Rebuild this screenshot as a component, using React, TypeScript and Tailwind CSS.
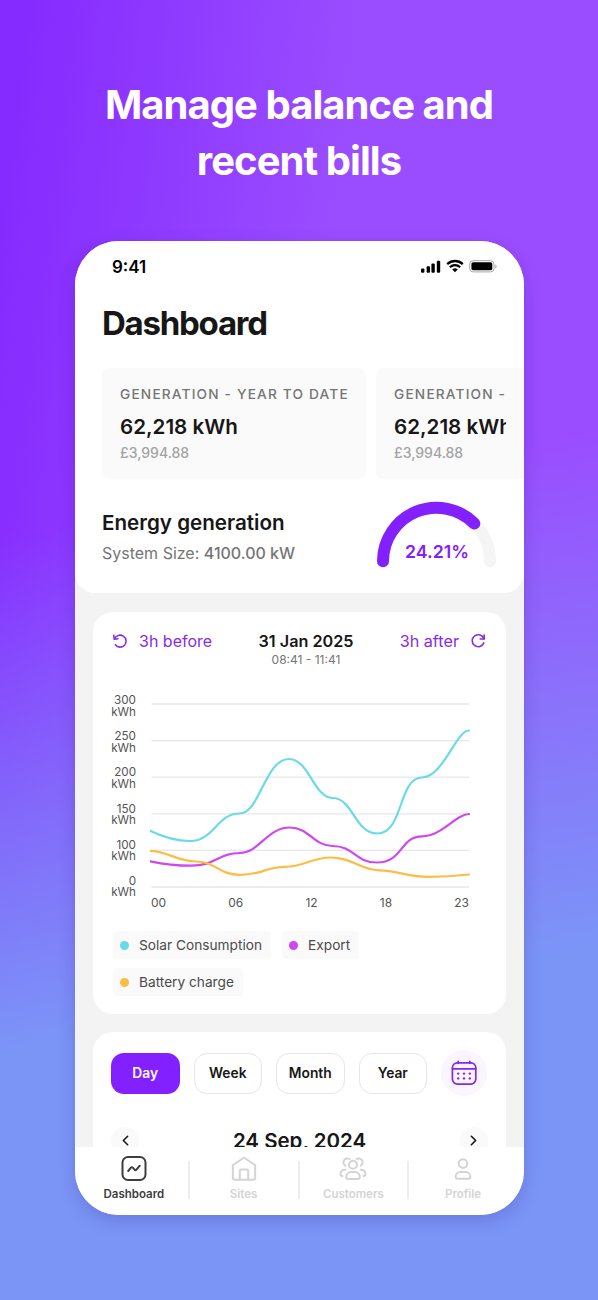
import { ChevronLeft, ChevronRight } from 'lucide-react'
import type { ReactNode } from 'react'

const stats = [
  { id: 'ytd', label: 'GENERATION - YEAR TO DATE', value: '62,218 kWh', amount: '£3,994.88' },
  { id: 'month', label: 'GENERATION - MONTH', value: '62,218 kWh', amount: '£3,994.88' },
]

const yLabels = ['300', '250', '200', '150', '100', '0']
const xLabels = ['00', '06', '12', '18', '23']

// paths share the chart's 320x190 box
const series = [
  {
    name: 'Solar Consumption',
    color: '#69dbe8',
    d: 'M0.5 130.5C12 136 25 140.5 40 140.5C64 140.5 67 113 89.5 113C110 113 115 58.5 139 58.5C159 58.5 164 97.5 182.5 97.5C203 97.5 205 133 227 133C254 133 248 77 272 77C293 77 306 30 319 30',
  },
  {
    name: 'Export',
    color: '#cf47ee',
    d: 'M0.5 160.8C13 163.5 26 165.2 41 165.2C66 165.2 68 152.5 90 152.5C109 152.5 117 127 140 127C159 127 164 145.5 182.5 145.5C204 145.5 205 162 227 162C253 162 250 135.8 272 135.8C292 135.8 306 113.5 319 113.5',
  },
  {
    name: 'Battery charge',
    color: '#fbbd48',
    d: 'M0.5 150.3C16 150.3 28 161 46 161C66 161 68 174.3 90 174.3C113 174.3 115 166.3 135 166.3C154 166.3 161 157 181 157C202 157 210 169.5 229 169.8C249 170 255 176.4 279 176.4C293 176.4 306 175.5 319 174',
  },
]

const periods = ['Day', 'Week', 'Month', 'Year']

function StatusIcons() {
  return (
    <svg width="78" height="16" viewBox="0 0 78 16" fill="none">
      <rect x="1" y="9.6" width="3.4" height="4.2" rx="1" fill="#000" />
      <rect x="6.6" y="7.2" width="3.4" height="6.6" rx="1" fill="#000" />
      <rect x="11.4" y="4.6" width="3.4" height="9.2" rx="1" fill="#000" />
      <rect x="16.8" y="1.7" width="3.4" height="12.1" rx="1" fill="#000" />
      <path d="M27.2 5.1a11.3 11.3 0 0 1 15.6 0" stroke="#000" strokeWidth="2.3" />
      <path d="M29.9 8.2a7.3 7.3 0 0 1 10.2 0" stroke="#000" strokeWidth="2.2" />
      <path d="M32.2 10.6a4.1 4.1 0 0 1 5.6 0L35 13.3z" fill="#000" />
      <rect x="49.7" y="1.7" width="24.3" height="11.2" rx="3.4" stroke="#a6a6a6" />
      <rect x="51.4" y="3.3" width="20.9" height="8" rx="1.7" fill="#000" />
      <path d="M75.3 5.4v4a2.2 2.2 0 0 0 0-4z" fill="#a6a6a6" />
    </svg>
  )
}

function RewindIcon() {
  return (
    <svg width="16" height="16" viewBox="0 0 16 16" fill="none" stroke="#8a2be2" strokeWidth="1.6" strokeLinecap="round" strokeLinejoin="round">
      <path d="M1.8 2.4l.5 3.8 3.7-.5" />
      <path d="M2.5 5.9A6 6 0 1 1 3.3 11.8" />
    </svg>
  )
}

function ForwardIcon() {
  return (
    <svg width="16" height="16" viewBox="0 0 16 16" fill="none" stroke="#8a2be2" strokeWidth="1.6" strokeLinecap="round" strokeLinejoin="round">
      <path d="M14.2 2v4h-4" />
      <path d="M13.9 5.8A6 6 0 1 0 13.8 9.9" />
    </svg>
  )
}

function CalendarIcon() {
  return (
    <svg width="28" height="28" viewBox="0 0 28 28" fill="none" stroke="#8426f0" strokeWidth="1.7" strokeLinecap="round">
      <rect x="2.4" y="3.8" width="23.4" height="21.3" rx="5" />
      <path d="M2.4 9.8h23.4M8.2 2.300v2M19.800 2.300v2" />
      {[8.2, 14, 19.8].map(x => (
        <g key={x} fill="#8426f0" stroke="none">
          <circle cx={x} cy="14.6" r="1.2" />
          <circle cx={x} cy="19.4" r="1.2" />
        </g>
      ))}
    </svg>
  )
}

function Gauge() {
  return (
    <svg width="120" height="68" viewBox="0 0 120 68" fill="none" strokeWidth="12" strokeLinecap="round">
      <path d="M6 60.2a53.5 53.5 0 0 1 107 0" stroke="#f5f5f5" />
      <path d="M6 60.2a53.5 53.5 0 0 1 91.3-37.8" stroke="#8320ff" />
    </svg>
  )
}

function Tab({ label, active, children }: { label: string; active?: boolean; children: ReactNode }) {
  return (
    <div className={active ? 'flex-1 flex flex-col items-center text-[#3d3d3d]' : 'flex-1 flex flex-col items-center text-[#d4d4d4]'}>
      <svg width="28" height="28" viewBox="0 0 28 28" fill="none" stroke="currentColor" strokeWidth="2" strokeLinecap="round" strokeLinejoin="round">
        {children}
      </svg>
      <span className="mt-[3px] text-[11.5px] leading-4 font-semibold">{label}</span>
    </div>
  )
}

function Divider() {
  return <div className="-mx-px mt-[6px] h-[38px] w-0.5 bg-[#ededed]" />
}

export default function App() {
  return (
    <div className="h-[1300px] w-[598px] overflow-hidden bg-[linear-gradient(170deg,#7b95f700_38%,#7b95f7_75%),linear-gradient(97deg,#862bff_4%,#9a4dff_48%)] font-['Inter',sans-serif]">
      <h1 className="pt-[77px] text-center text-[40px] leading-[56px] font-bold tracking-[-0.95px] text-white">
        Manage balance and
        <br />
        recent bills
      </h1>

      <div className="mt-[52px] ml-[75px] flex h-[974px] w-[449px] flex-col overflow-hidden rounded-[44px] bg-[#f3f3f3] shadow-[0_6px_18px_rgba(40,20,120,0.2)]">
        <header className="h-[352px] shrink-0 rounded-b-[20px] bg-white">
          <div className="flex h-[52px] items-center justify-between pr-[26px] pl-[37px]">
            <span className="text-[17px] leading-5 font-semibold text-black">9:41</span>
            <StatusIcons />
          </div>
          <h2 className="mt-[10px] pl-[27px] text-[33px] leading-10 font-bold tracking-[-1.25px] text-[#171717]">Dashboard</h2>

          <div className="mt-[25px] flex gap-[10px] overflow-hidden pl-[27px]">
            {stats.map((s, i) => (
              <div key={s.id} className="h-[111px] w-[264px] shrink-0 rounded-lg bg-[#fafafa] px-[18px] pt-4">
                <div className={i === 0 ? 'whitespace-nowrap' : 'w-[112px] overflow-hidden whitespace-nowrap'}>
                  <p className="text-[13.7px] leading-5 font-medium tracking-[1.18px] text-[#757575]">{s.label}</p>
                  <p className="mt-[9px] text-[20.6px] leading-7 font-semibold text-[#171717]">{s.value}</p>
                  <p className="mt-[3px] text-[14px] leading-[18px] font-medium text-[#a3a3a3]">{s.amount}</p>
                </div>
              </div>
            ))}
          </div>

          <div className="flex justify-between pt-[22px] pr-[27px] pl-[27px]">
            <div className="pt-2">
              <h3 className="text-[20.6px] leading-7 font-semibold text-[#171717]">Energy generation</h3>
              <p className="mt-1 text-[16px] leading-6 text-[#757575]">
                System Size: <span className="font-medium">4100.00 kW</span>
              </p>
            </div>
            <div className="relative h-[68px] w-[120px]">
              <Gauge />
              <span className="absolute inset-x-0 top-[39px] text-center text-[17.7px] leading-6 font-semibold text-[#8320ff]">24.21%</span>
            </div>
          </div>
        </header>

        <section className="mx-[18px] mt-[19px] h-[402px] shrink-0 rounded-[20px] bg-white">
          <div className="flex justify-between pt-[18px] pr-5 pl-[19px]">
            <div className="flex h-[22px] w-[104px] items-center gap-[11px] text-[16px] whitespace-nowrap text-[#8a2be2]">
              <RewindIcon />
              3h before
            </div>
            <div className="flex flex-col items-center">
              <span className="text-[16.2px] leading-[22px] font-semibold text-[#171717]">31 Jan 2025</span>
              <span className="text-[12px] leading-4 text-[#757575]">08:41 - 11:41</span>
            </div>
            <div className="flex h-[22px] w-[90px] items-center justify-end gap-[11px] text-[16.2px] whitespace-nowrap text-[#8a2be2]">
              3h after
              <ForwardIcon />
            </div>
          </div>

          <div className="mt-[27px] flex pl-[18px]">
            <div className="w-[25px] text-right text-[11.7px] leading-[11.5px] text-[#545454]">
              {yLabels.map(y => (
                <div key={y} className="h-[36.2px]">
                  {y}
                  <br />
                  kWh
                </div>
              ))}
            </div>
            <div className="ml-[14px] w-[320px] pt-[5px]">
              <svg width="320" height="190" viewBox="0 -0.5 320 190" fill="none">
                {yLabels.map((y, i) => (
                  <path key={y} d={`M1.5 ${3.5 + i * 36.6}H319`} stroke="#e7e7e9" strokeWidth="1.3" />
                ))}
                {series.map(s => (
                  <path key={s.name} d={s.d} stroke={s.color} strokeWidth="2.2" strokeLinecap="round" />
                ))}
              </svg>
              <div className="mt-[5px] flex justify-between pr-px pl-px text-[12px] leading-4 text-[#545454]">
                {xLabels.map(x => <span key={x}>{x}</span>)}
              </div>
            </div>
          </div>

          <div className="mt-[19px] flex flex-wrap gap-x-[11px] gap-y-[9px] pr-16 pl-5">
            {series.map(s => (
              <div key={s.name} className="flex h-7 items-center gap-[10px] rounded bg-[#fafafa] pr-[9px] pl-[7px] text-[13.7px] text-[#4a4a4a]">
                <span className="size-[9px] rounded-full" style={{ background: s.color }} />
                {s.name}
              </div>
            ))}
          </div>
        </section>

        <section className="mx-[18px] mt-[18px] min-h-0 flex-1 overflow-hidden rounded-t-[20px] bg-white">
          <div className="flex items-center gap-[14px] pt-[18px] pl-[18px]">
            {periods.map(p => (
              <button
                key={p}
                className={
                  p === 'Day'
                    ? 'h-[41px] w-[68.5px] rounded-[13px] bg-[#8320ff] text-[13.8px] font-semibold text-white'
                    : 'h-[41px] w-[68.5px] rounded-[13px] border border-[#e6e6e6] text-[13.8px] font-semibold text-[#171717]'
                }
              >
                {p}
              </button>
            ))}
            <div className="flex size-[46px] items-center justify-center rounded-full bg-[#faf5ff]">
              <CalendarIcon />
            </div>
          </div>
          <div className="flex items-center justify-between pt-[30px] pr-[18px] pl-[18px]">
            <span className="flex size-7 items-center justify-center rounded-full bg-[#fafafa]">
              <ChevronLeft size={17} color="#171717" strokeWidth={2.3} />
            </span>
            <span className="pt-px text-[20.5px] leading-7 font-semibold text-[#171717]">24 Sep, 2024</span>
            <span className="flex size-7 items-center justify-center rounded-full bg-[#fafafa]">
              <ChevronRight size={17} color="#171717" strokeWidth={2.3} />
            </span>
          </div>
        </section>

        <nav className="flex h-[68px] shrink-0 bg-white pt-2 pr-[6px] pl-1">
          <Tab label="Dashboard" active>
            <rect x="2.5" y="2" width="23" height="23" rx="5.5" />
            <path d="M8.2 16l2.7-3.3c.6-.7 1.3-.7 1.9 0l1.7 2c.6.7 1.3.7 1.9 0l3.4-4" />
          </Tab>
          <Divider />
          <Tab label="Sites">
            <path d="M2.8 10.300v12.200q0 2.200 2.200 2.200h18q2.200 0 2.200-2.200V10.300L15 3.200q-1-.8-2 0z" />
            <path d="M9.8 24.500v-8.500q0-1.500 1.500-1.500h5.400q1.500 0 1.500 1.500V24.500" />
          </Tab>
          <Divider />
          <Tab label="Customers">
            <circle cx="14" cy="9.8" r="4" />
            <path d="M7.2 22.100c0-3 2.200-5 5-5h3.600c2.800 0 5 2 5 5q0 2-2 2H9.200q-2 0-2-2z" />
            <path d="M6.300 10.600a3.800 3.800 0 1 1 4.200-6.600M21.700 10.600a3.800 3.800 0 1 0-4.200-6.600" />
            <path d="M3.400 21.100q-2-.2-1.900-2c.2-2.500 2-4.300 4.800-4.300M24.600 21.100q2-.2 1.900-2c-.2-2.500-2-4.300-4.800-4.300" />
          </Tab>
          <Divider />
          <Tab label="Profile">
            <circle cx="14" cy="8.600" r="4.300" />
            <path d="M6.700 21.800c0-2.800 2-4.700 4.600-4.700h5.400c2.600 0 4.600 1.900 4.600 4.700q0 1.900-2 1.900H8.700q-2 0-2-1.900z" />
          </Tab>
        </nav>
      </div>
    </div>
  )
}
